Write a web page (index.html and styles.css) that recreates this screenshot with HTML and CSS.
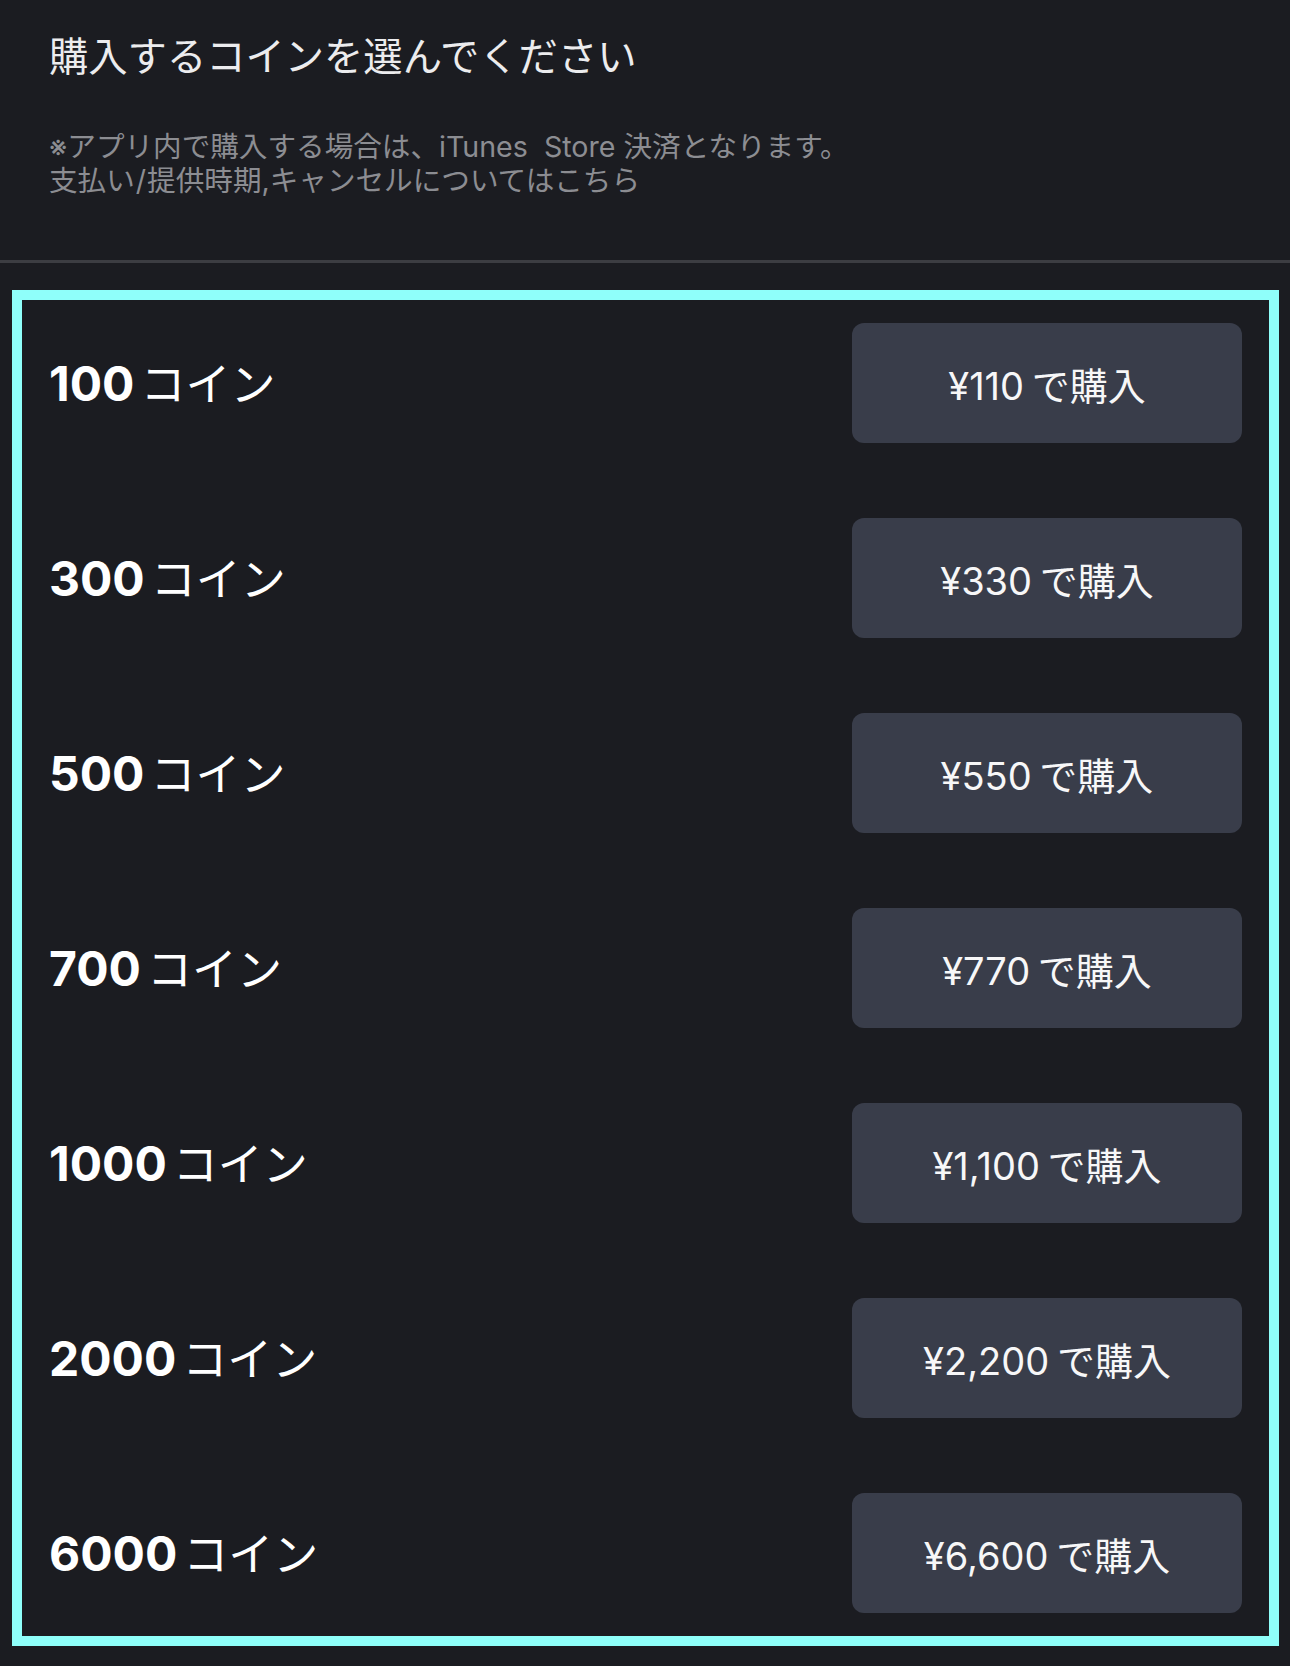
FILE: index.html
```html
<!DOCTYPE html>
<html lang="ja">
<head>
<meta charset="utf-8">
<title>コイン購入</title>
<link rel="stylesheet" href="styles.css">
</head>
<body>
<header class="head">
  <h1 class="title">購入するコインを選んでください</h1>
  <p class="note">※アプリ内で購入する場合は、iTunes&nbsp; Store 決済となります。<br>支払い<span class="slash">/</span>提供時期,キャンセルについてはこちら</p>
</header>
<div class="rule"></div>
<section class="list">
  <div class="row"><div class="label"><span class="num">100</span>コイン</div><button class="buy">¥110 で購入</button></div>
  <div class="row"><div class="label"><span class="num">300</span>コイン</div><button class="buy">¥330 で購入</button></div>
  <div class="row"><div class="label"><span class="num">500</span>コイン</div><button class="buy">¥550 で購入</button></div>
  <div class="row"><div class="label"><span class="num">700</span>コイン</div><button class="buy">¥770 で購入</button></div>
  <div class="row"><div class="label"><span class="num">1000</span>コイン</div><button class="buy">¥1,100 で購入</button></div>
  <div class="row"><div class="label"><span class="num">2000</span>コイン</div><button class="buy">¥2,200 で購入</button></div>
  <div class="row"><div class="label"><span class="num">6000</span>コイン</div><button class="buy">¥6,600 で購入</button></div>
</section>
</body>
</html>
```
FILE: styles.css
```css
html, body {
  margin: 0;
  padding: 0;
}
body {
  background: #1b1c21;
  color: #ffffff;
  font-family: "Inter", "Noto Sans CJK JP", sans-serif;
  width: 1290px;
  min-height: 1666px;
}
.head {
  padding: 34px 49px 62px;
}
.title {
  margin: 0;
  font-size: 39.3px;
  line-height: 46px;
  font-weight: 400;
  color: #ececee;
}
.note {
  margin: 50px 0 0;
  font-size: 28.6px;
  line-height: 34px;
  color: #8c8d92;
}
.slash {
  padding: 0 1px;
}
.rule {
  height: 3px;
  background: #3c3d42;
}
.list {
  margin: 27px 11px 20px 12px;
  border: 10px solid #8ffffa;
  padding: 23px 27px;
  display: flex;
  flex-direction: column;
  gap: 75px;
}
.row {
  height: 120px;
  display: flex;
  align-items: center;
  justify-content: space-between;
}
.label {
  font-size: 45px;
  font-weight: 400;
  color: #ffffff;
  white-space: nowrap;
  margin-top: -3px;
}
.num {
  font-size: 48px;
  font-weight: 700;
  margin-right: 6px;
}
.buy {
  width: 390px;
  height: 120px;
  border: 0;
  border-radius: 12px;
  background: #393d4a;
  color: #f7f7f8;
  font-family: "Inter", "Noto Sans CJK JP", sans-serif;
  font-size: 38px;
  font-weight: 400;
  word-spacing: -3px;
  padding: 0;
}
```
